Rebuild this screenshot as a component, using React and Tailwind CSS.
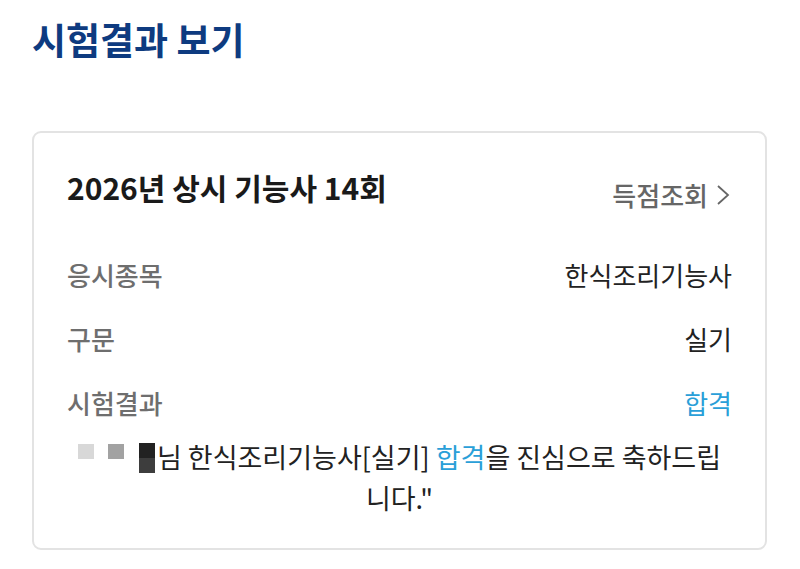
import React from "react";

export default function App() {
  const font = { fontFamily: '"Noto Sans CJK KR", "Noto Sans", sans-serif' };
  return (
    <div className="w-[800px] h-[569px] bg-white overflow-hidden" style={font}>
      <div className="px-[32px]">
        <h1 className="pt-[14px] text-[37px] leading-[50px] font-bold text-[#0e3b80]">
          시험결과 보기
        </h1>
        <div className="mt-[67px] w-[735px] h-[419px] border-2 border-[#e3e3e3] rounded-[9px] px-[33px] pt-[34px]">
          <div className="flex items-start justify-between">
            <div className="text-[30px] leading-[40px] font-bold text-[#1a1a1a]">
              2026년 상시 기능사 14회
            </div>
            <div className="mt-[12px] flex items-center text-[26px] leading-[32px] font-medium text-[#666666]">
              득점조회
              <svg width="18" height="24" viewBox="0 0 18 24" className="ml-[6px]">
                <path d="M4 3 L14 12 L4 21" fill="none" stroke="#666" strokeWidth="1.8" />
              </svg>
            </div>
          </div>
          <div className="mt-[47px] flex flex-col gap-[30px]">
            <div className="flex items-center justify-between text-[26px] leading-[34px]">
              <span className="font-medium text-[#6e6e6e]">응시종목</span>
              <span className="text-[#222222]">한식조리기능사</span>
            </div>
            <div className="flex items-center justify-between text-[26px] leading-[34px]">
              <span className="font-medium text-[#6e6e6e]">구문</span>
              <span className="text-[#222222]">실기</span>
            </div>
            <div className="flex items-center justify-between text-[26px] leading-[34px]">
              <span className="font-medium text-[#6e6e6e]">시험결과</span>
              <span className="text-[#2a9fd8]">합격</span>
            </div>
          </div>
          <p className="mt-[16px] text-center text-[27px] leading-[41px] text-[#222222]">
            <span className="whitespace-nowrap">
              <span className="inline-flex items-start align-top pt-[7px] mr-[2px]">
                <span className="inline-block w-[16px] h-[15px] bg-[#d8d8d8] mt-[1px]" />
                <span className="inline-block w-[16px] h-[15px] bg-[#a2a2a2] ml-[14px] mt-[1px]" />
                <span className="inline-flex flex-col ml-[15px]">
                  <span className="block w-[16px] h-[15px] bg-[#222222]" />
                  <span className="block w-[16px] h-[15px] bg-[#3d3d3d]" />
                </span>
              </span>
              님 한식조리기능사[실기] <span className="text-[#2a9fd8]">합격</span>을 진심으로 축하드립
            </span>
            <br />
            니다."
          </p>
        </div>
      </div>
    </div>
  );
}
